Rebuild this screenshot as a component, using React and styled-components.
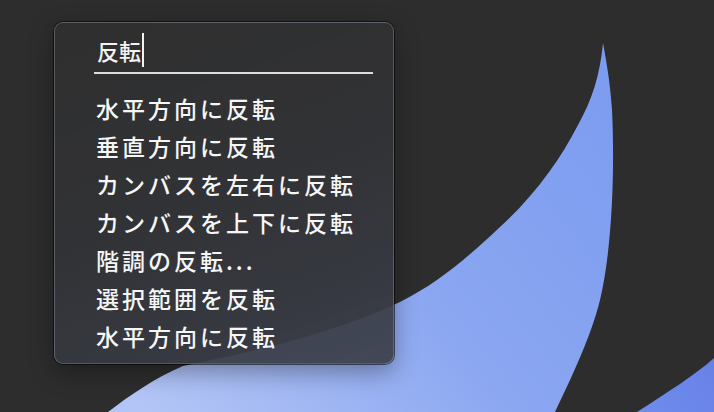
import React from "react";
import styled, { createGlobalStyle } from "styled-components";

const GlobalStyle = createGlobalStyle`
  html, body {
    margin: 0;
    padding: 0;
    background: #2d2d2d;
  }
`;

const Stage = styled.div`
  position: relative;
  width: 714px;
  height: 412px;
  overflow: hidden;
  background: #2d2d2d;
  padding: 22px 0 0 54px;
  box-sizing: border-box;
  font-family: "Noto Sans CJK JP", "Noto Sans", sans-serif;
`;

const Artwork = styled.svg`
  position: absolute;
  left: 0;
  top: 0;
`;

const Panel = styled.div`
  position: relative;
  width: 340px;
  height: 342px;
  box-sizing: border-box;
  border: 1px solid rgba(255, 255, 255, 0.2);
  border-radius: 9px;
  background: linear-gradient(160deg, rgba(47, 47, 47, 0.97) 0%, rgba(50, 51, 54, 0.95) 50%, rgba(60, 64, 76, 0.93) 100%);
  box-shadow: 0 0 0 1px rgba(0, 0, 0, 0.55), 0 8px 24px rgba(0, 0, 0, 0.35);
  padding-top: 10px;
  display: flex;
  flex-direction: column;
`;

const SearchField = styled.div`
  margin: 0 20px 0 39px;
  padding: 0 0 5px 3px;
  border-bottom: 2px solid #dcdcdc;
  display: flex;
  align-items: center;
  height: 34px;
`;

const Query = styled.span`
  font-size: 22px;
  font-weight: 500;
  line-height: 34px;
  color: #f2f2f2;
`;

const Caret = styled.span`
  width: 1.5px;
  height: 34px;
  background: #f2f2f2;
  margin-left: 1px;
`;

const List = styled.ul`
  list-style: none;
  margin: 15px 0 0 0;
  padding: 0;
`;

const Item = styled.li`
  padding-left: 41px;
  height: 38px;
  line-height: 38px;
  font-size: 23px;
  font-weight: 500;
  letter-spacing: 3px;
  color: #f6f6f6;
  white-space: nowrap;
`;

const items = [
  "水平方向に反転",
  "垂直方向に反転",
  "カンバスを左右に反転",
  "カンバスを上下に反転",
  "階調の反転...",
  "選択範囲を反転",
  "水平方向に反転",
];

export default function App() {
  return (
    <Stage>
      <GlobalStyle />
      <Artwork width="714" height="412" viewBox="0 0 714 412">
        <defs>
          <linearGradient id="crescent" x1="620" y1="40" x2="150" y2="412" gradientUnits="userSpaceOnUse">
            <stop offset="0" stopColor="#7b9bf0" />
            <stop offset="0.5" stopColor="#8aa6f1" />
            <stop offset="1" stopColor="#b3c5f6" />
          </linearGradient>
          <linearGradient id="corner" x1="714" y1="360" x2="640" y2="412" gradientUnits="userSpaceOnUse">
            <stop offset="0" stopColor="#6881e8" />
            <stop offset="1" stopColor="#6f8cec" />
          </linearGradient>
        </defs>
        <path
          fill="url(#crescent)"
          d="M603 43 C 600 75 592 100 578 125 C 560 160 535 195 500 227 C 470 255 440 282 400 302 C 330 335 250 352 183 366 C 155 378 130 395 108 412 L 555 412 C 570 380 590 340 600 300 C 612 250 615 170 612 110 C 610 80 606 60 603 43 Z"
        />
        <path
          fill="url(#corner)"
          d="M714 358 C 695 375 668 392 637 412 L 714 412 Z"
        />
      </Artwork>
      <Panel>
        <SearchField>
          <Query>反転</Query>
          <Caret />
        </SearchField>
        <List>
          {items.map((label, i) => (
            <Item key={i}>{label}</Item>
          ))}
        </List>
      </Panel>
    </Stage>
  );
}
